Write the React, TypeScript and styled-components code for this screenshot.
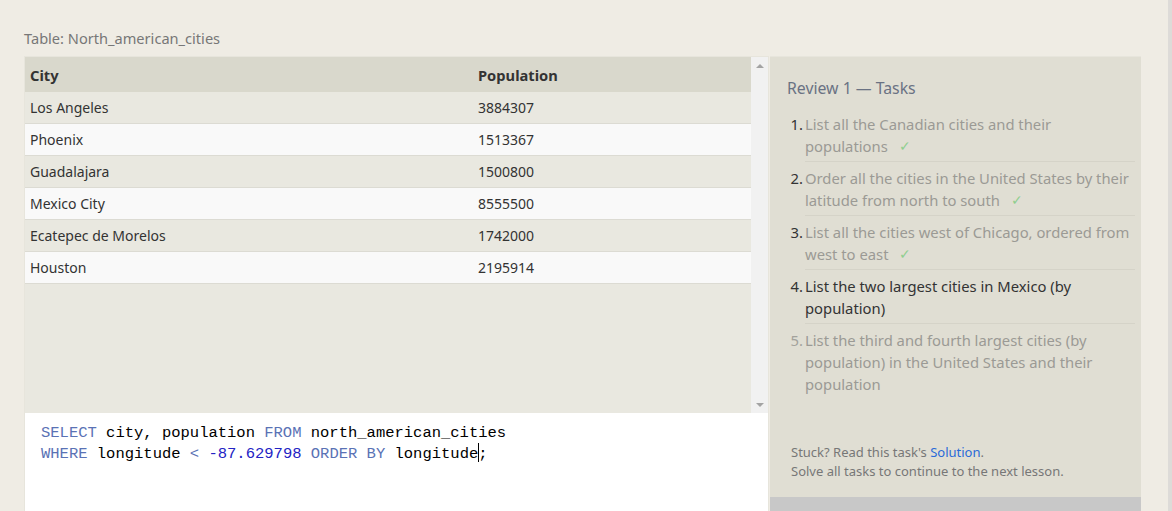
import React from 'react';
import styled, {createGlobalStyle} from 'styled-components';

const rows = [
    {city: 'Los Angeles', population: 3884307},
    {city: 'Phoenix', population: 1513367},
    {city: 'Guadalajara', population: 1500800},
    {city: 'Mexico City', population: 8555500},
    {city: 'Ecatepec de Morelos', population: 1742000},
    {city: 'Houston', population: 2195914},
];

const tasks = [
    {text: 'List all the Canadian cities and their populations', state: 'done'},
    {text: 'Order all the cities in the United States by their latitude from north to south', state: 'done'},
    {text: 'List all the cities west of Chicago, ordered from west to east', state: 'done'},
    {text: 'List the two largest cities in Mexico (by population)', state: 'current'},
    {text: 'List the third and fourth largest cities (by population) in the United States and their population', state: 'todo'},
];

const App: React.FC = () => {
    return (
        <>
            <GlobalStyle/>
            <Shell>
                <Page>
                    <Caption>Table: North_american_cities</Caption>
                    <Workspace>
                        <LeftPanel>
                            <TableView>
                                <Table>
                                    <HeadRow>
                                        <Cell>City</Cell>
                                        <Cell>Population</Cell>
                                    </HeadRow>
                                    {rows.map((r, i) => (
                                        <Row key={r.city} $odd={i % 2 === 0}>
                                            <Cell>{r.city}</Cell>
                                            <Cell>{r.population}</Cell>
                                        </Row>
                                    ))}
                                </Table>
                                <Scrollbar>
                                    <Arrow $dir="up"/>
                                    <Arrow $dir="down"/>
                                </Scrollbar>
                            </TableView>
                            <Editor>
                                <CodeLine>
                                    <Kw>SELECT</Kw> city, population <Kw>FROM</Kw> north_american_cities
                                </CodeLine>
                                <CodeLine>
                                    <Kw>WHERE</Kw> longitude <Kw>&lt;</Kw> <Num>-87.629798</Num> <Kw>ORDER BY</Kw> longitude<Caret/>;
                                </CodeLine>
                            </Editor>
                        </LeftPanel>
                        <RightPanel>
                            <Tasks>
                                <TasksTitle>Review 1 — Tasks</TasksTitle>
                                <TaskList>
                                    {tasks.map((t, i) => (
                                        <Task key={i} $state={t.state}>
                                            <TaskNum>{i + 1}.</TaskNum>
                                            <TaskText $state={t.state}>
                                                {t.text}
                                                {t.state === 'done' && <Check>✓</Check>}
                                            </TaskText>
                                        </Task>
                                    ))}
                                </TaskList>
                            </Tasks>
                            <Hint>
                                <div>Stuck? Read this task's <a>Solution</a>.</div>
                                <div>Solve all tasks to continue to the next lesson.</div>
                            </Hint>
                            <Footer/>
                        </RightPanel>
                    </Workspace>
                </Page>
                <PageScroll/>
            </Shell>
        </>
    )
};

export default App

const GlobalStyle = createGlobalStyle`
  html, body {
    margin: 0;
    padding: 0;
    background: #efece4;
    font-family: "Noto Sans", "Open Sans", sans-serif;
  }
  * {
    box-sizing: border-box;
  }
`;

const Shell = styled.div`
  display: flex;
  height: 511px;
  overflow: hidden;
`;

const Page = styled.div`
  flex: 1;
  display: flex;
  flex-direction: column;
  padding: 0 27px 0 24px;
`;

const PageScroll = styled.div`
  width: 4px;
  background: #dddbd8;
`;

const Caption = styled.div`
  height: 56px;
  padding-top: 28px;
  line-height: 20px;
  font-size: 14.6px;
  color: #777;
`;

const Workspace = styled.div`
  flex: 1;
  display: flex;
  min-height: 0;
`;

const LeftPanel = styled.div`
  width: 745px;
  display: flex;
  flex-direction: column;
  border: 1px solid #e7e5dc;
  border-bottom: none;
`;

const TableView = styled.div`
  height: 356px;
  display: flex;
  background: #e9e8e0;
`;

const Table = styled.div`
  flex: 1;
  display: flex;
  flex-direction: column;
`;

const HeadRow = styled.div`
  display: grid;
  grid-template-columns: 448px 1fr;
  height: 35px;
  align-items: center;
  background: #d9d8cc;
  font-weight: 700;
  font-size: 14.7px;
  color: #333;
`;

const Row = styled.div<{ $odd: boolean }>`
  display: grid;
  grid-template-columns: 448px 1fr;
  height: 32px;
  align-items: center;
  background: ${p => p.$odd ? '#e9e8e0' : '#f9f9f9'};
  border-bottom: 1px solid #dcdbd3;
  font-size: 14px;
  color: #333;
`;

const Cell = styled.div`
  padding-left: 5px;
`;

const Scrollbar = styled.div`
  width: 17px;
  background: #f1f1f1;
  display: flex;
  flex-direction: column;
  justify-content: space-between;
  align-items: center;
  padding: 7px 0 6px;
`;

const Arrow = styled.div<{ $dir: 'up' | 'down' }>`
  width: 0;
  height: 0;
  border-left: 4px solid transparent;
  border-right: 4px solid transparent;
  ${p => p.$dir === 'up' ? 'border-bottom: 4px solid #a3a3a3;' : 'border-top: 4px solid #a3a3a3;'}
`;

const Editor = styled.div`
  flex: 1;
  background: #fff;
  padding: 10px 16px;
  font-family: "Liberation Mono", "DejaVu Sans Mono", monospace;
  font-size: 15.5px;
  line-height: 20px;
  color: #000;
`;

const CodeLine = styled.div`
  white-space: pre;
`;

const Kw = styled.span`
  color: #5a72b5;
`;

const Num = styled.span`
  color: #2323c4;
`;

const Caret = styled.span`
  display: inline-block;
  width: 1px;
  height: 19px;
  background: #000;
  vertical-align: -4px;
  margin-right: -1px;
`;

const RightPanel = styled.div`
  flex: 1;
  margin-left: 1px;
  display: flex;
  flex-direction: column;
  background: #e0ded3;
  border-top: 1px solid #e7e5dc;
`;

const Tasks = styled.div`
  flex: 1;
  padding: 20px 6px 0 17px;
`;

const TasksTitle = styled.div`
  font-size: 15.8px;
  line-height: 22px;
  color: #6a7283;
  margin-bottom: 9px;
`;

const TaskList = styled.ol`
  list-style: none;
  margin: 0;
  padding: 0;
`;

const Task = styled.li<{ $state: string }>`
  display: grid;
  grid-template-columns: 18px 1fr;
  font-size: 14.8px;
  line-height: 22px;
  color: ${p => p.$state === 'todo' ? '#a3a29c' : '#333'};

  &:last-child > div {
    border-bottom: none;
  }
`;

const TaskNum = styled.span`
  text-align: right;
  padding: 5px 2px 0 0;
`;

const TaskText = styled.div<{ $state: string }>`
  padding: 5px 0 4px;
  border-bottom: 1px solid #d5d3c8;
  color: ${p => p.$state === 'current' ? '#333' : '#9b9a95'};
`;

const Check = styled.span`
  display: inline-block;
  height: 22px;
  line-height: 22px;
  font-size: 14px;
  color: #8fce8f;
  margin-left: 11px;
  vertical-align: top;
`;

const Hint = styled.div`
  padding: 0 8px 16px 21px;
  font-size: 13px;
  line-height: 19px;
  color: #777;

  a {
    color: #2a6ad8;
  }
`;

const Footer = styled.div`
  height: 14px;
  background: #c8c8c8;
`;
